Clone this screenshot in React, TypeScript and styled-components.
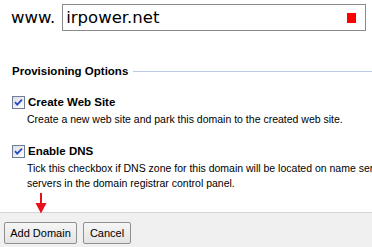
import React from 'react';
import styled, { createGlobalStyle } from 'styled-components';

const GlobalStyle = createGlobalStyle`
  html, body {
    margin: 0;
    padding: 0;
    background: #ffffff;
    overflow: hidden;
  }
`;

const Page = styled.div`
  position: relative;
  width: 372px;
  height: 247px;
  overflow: hidden;
  display: flex;
  flex-direction: column;
  font-family: 'Liberation Sans', Arial, sans-serif;
  color: #000;
`;

const DomainRow = styled.div`
  display: flex;
  align-items: center;
  gap: 7px;
  padding: 4px 0 0 11px;
  font-family: 'DejaVu Sans', Verdana, sans-serif;
  font-size: 16.5px;
`;

const Prefix = styled.span`
  line-height: 27px;
`;

const DomainBox = styled.div`
  box-sizing: border-box;
  width: 304px;
  height: 27px;
  border: 1px solid #8a8a8a;
  display: flex;
  align-items: center;
  justify-content: space-between;
  padding: 0 9px 0 3px;
`;

const ErrorMark = styled.span`
  width: 9px;
  height: 10px;
  background: #ff0000;
`;

const Section = styled.div`
  display: flex;
  flex-direction: column;
  padding-left: 12px;
`;

const TitleRow = styled.div`
  display: flex;
  align-items: center;
  gap: 5px;
  height: 14px;
  margin-top: 33px;
`;

const Title = styled.span`
  font-weight: bold;
  font-size: 11.5px;
  white-space: nowrap;
`;

const Rule = styled.span`
  flex: 1;
  height: 1px;
  background: #b9c9e3;
`;

const Option = styled.div<{ $top: number }>`
  margin-top: ${(p) => p.$top}px;
  display: flex;
  flex-direction: column;
`;

const CheckRow = styled.label`
  display: flex;
  align-items: center;
  gap: 3px;
  height: 14px;
  font-weight: bold;
  font-size: 11.5px;
`;

const Desc = styled.div`
  margin: 3px 0 0 15px;
  font-size: 10.5px;
  line-height: 15px;
  white-space: nowrap;
`;

const Footer = styled.div`
  margin-top: auto;
  height: 35px;
  border-top: 1px solid #d4d4d4;
  background: #f0f0f0;
  display: flex;
  align-items: flex-start;
  gap: 6px;
  padding: 9px 0 0 4px;
  box-sizing: border-box;
`;

const Button = styled.button<{ $w: number }>`
  width: ${(p) => p.$w}px;
  height: 22px;
  padding: 0;
  border: 1px solid #8f8f8f;
  border-radius: 2px;
  background: linear-gradient(#f6f6f6, #e3e3e3);
  font-family: 'Liberation Sans', Arial, sans-serif;
  font-size: 11px;
  color: #000;
`;

const Arrow = styled.svg`
  position: absolute;
  left: 35px;
  top: 193px;
`;

const CheckBox = () => (
  <svg width="13" height="13" viewBox="0 0 13 13">
    <defs>
      <linearGradient id="cbg" x1="0" y1="0" x2="1" y2="1">
        <stop offset="0" stopColor="#dcdce0" />
        <stop offset="1" stopColor="#ffffff" />
      </linearGradient>
    </defs>
    <rect x="0.5" y="0.5" width="12" height="12" fill="url(#cbg)" stroke="#6e7d99" />
    <path d="M3 6.2 L5.2 8.6 L10 3.6" fill="none" stroke="#2847c4" strokeWidth="1.8" />
  </svg>
);

export default function App() {
  return (
    <Page>
      <GlobalStyle />
      <DomainRow>
        <Prefix>www.</Prefix>
        <DomainBox>
          <span>irpower.net</span>
          <ErrorMark />
        </DomainBox>
      </DomainRow>
      <Section>
        <TitleRow>
          <Title>Provisioning Options</Title>
          <Rule />
        </TitleRow>
        <Option $top={17}>
          <CheckRow>
            <CheckBox />
            Create Web Site
          </CheckRow>
          <Desc>Create a new web site and park this domain to the created web site.</Desc>
        </Option>
        <Option $top={17}>
          <CheckRow>
            <CheckBox />
            Enable DNS
          </CheckRow>
          <Desc>
            Tick this checkbox if DNS zone for this domain will be located on name servers
            <br />
            servers in the domain registrar control panel.
          </Desc>
        </Option>
      </Section>
      <Footer>
        <Button $w={73}>Add Domain</Button>
        <Button $w={48}>Cancel</Button>
      </Footer>
      <Arrow width="12" height="21" viewBox="0 0 12 21">
        <rect x="5" y="0" width="2" height="12" fill="#e8101a" />
        <path d="M0.5 10 L11.5 10 L6 20.5 Z" fill="#e8101a" />
      </Arrow>
    </Page>
  );
}
